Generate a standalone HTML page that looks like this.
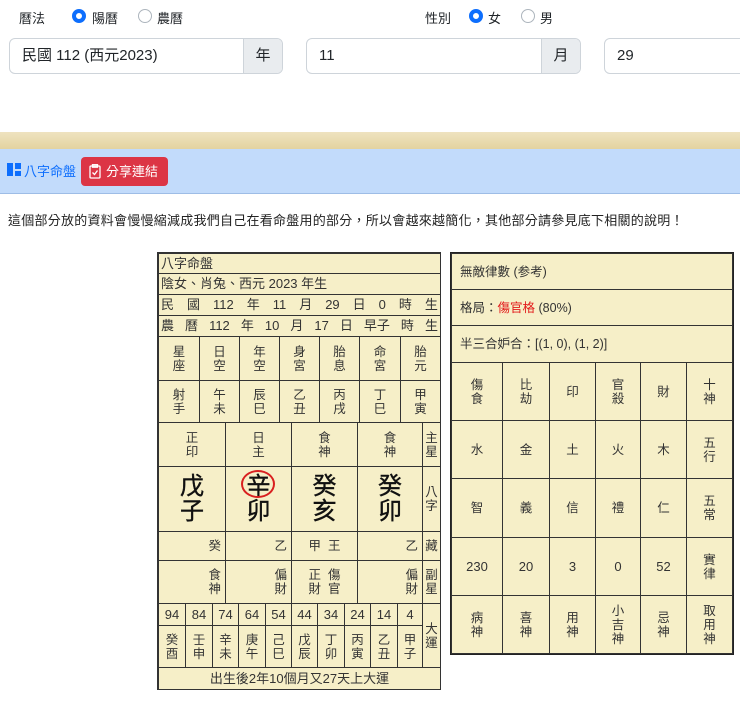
<!DOCTYPE html>
<html><head><meta charset="utf-8"><style>
*{box-sizing:border-box;margin:0;padding:0}
body{width:740px;height:705px;overflow:hidden;background:#fff;font-family:"Liberation Sans","Noto Sans CJK TC",sans-serif;color:#212529;position:relative}
.a{position:absolute}
.rad{position:absolute;width:14px;height:14px;border-radius:50%;border:1px solid #adb5bd;background:#fff}
.rad.on{border:4px solid #0d6efd}
.inp{position:absolute;top:38px;height:36px;border:1px solid #ced4da;border-radius:6px;background:#fff;font-size:15px;padding:8px 12px;line-height:18px;overflow:hidden}
.add{position:absolute;top:0;bottom:0;right:0;width:39px;background:#e9ecef;border-left:1px solid #ced4da;text-align:center;line-height:34px}
.c{position:absolute;border:1px solid #333;background:#f6efc8;display:flex;align-items:center;justify-content:center;font-size:12.5px;line-height:14px;color:#333;text-align:center}
.l{justify-content:flex-start;padding-left:2px;font-size:13px}
.sp{justify-content:space-between;padding:0 2px;font-size:13px}
.r{justify-content:flex-end;padding-right:4px}
.big{font-size:24px;line-height:25px;color:#111;font-weight:normal;-webkit-text-stroke:0.4px #111}
</style></head><body>
<div class="a" style="left:19px;top:8px;font-size:13px">曆法</div>
<div class="rad on" style="left:72px;top:9px"></div><div class="a" style="left:92px;top:8px;font-size:13px">陽曆</div>
<div class="rad" style="left:138px;top:9px"></div><div class="a" style="left:157px;top:8px;font-size:13px">農曆</div>
<div class="a" style="left:425px;top:8px;font-size:13px">性別</div>
<div class="rad on" style="left:469px;top:9px"></div><div class="a" style="left:488px;top:8px;font-size:13px">女</div>
<div class="rad" style="left:521px;top:9px"></div><div class="a" style="left:540px;top:8px;font-size:13px">男</div>
<div class="inp" style="left:9px;width:274px">民國 112 (西元2023)<div class="add">年</div></div>
<div class="inp" style="left:306px;width:275px">11<div class="add">月</div></div>
<div class="inp" style="left:604px;width:150px">29</div>
<div class="a" style="left:0;top:132px;width:740px;height:17px;background:linear-gradient(#efe3c0,#e3d3a0)"></div>
<div class="a" style="left:0;top:149px;width:740px;height:45px;background:#c2dbfb;border-bottom:1px solid #9ebde6"></div>
<svg class="a" style="left:7px;top:163px" width="14" height="13"><rect x="0" y="0" width="6" height="13" fill="#0d6efd"/><rect x="8" y="0" width="6" height="6" fill="#0d6efd"/><rect x="8" y="8" width="6" height="5" fill="#0d6efd"/></svg>
<div class="a" style="left:24px;top:161px;font-size:13px;color:#0d6efd">八字命盤</div>
<div class="a" style="left:81px;top:157px;width:87px;height:29px;background:#dc3545;border-radius:4px;color:#fff;font-size:13px;line-height:29px;padding-left:25px">分享連結</div>
<svg class="a" style="left:89px;top:164px" width="12" height="15" fill="none" stroke="#fff" stroke-width="1.3"><rect x="1" y="2" width="10" height="12" rx="1"/><rect x="3.5" y="0.7" width="5" height="2.5"/><path d="M3.5 8.5l2 2 3-4"/></svg>
<div class="a" style="left:8px;top:210px;font-size:13px;letter-spacing:0.25px;color:#222;white-space:nowrap">這個部分放的資料會慢慢縮減成我們自己在看命盤用的部分，所以會越來越簡化，其他部分請參見底下相關的說明！</div>

<div class="a" style="left:157px;top:252px;width:284px;height:438px;border:1px solid #333;background:#f6efc8"></div>
<div class="c l" style="left:158px;top:253px;width:283px;height:21px">八字命盤</div>
<div class="c l" style="left:158px;top:273px;width:283px;height:22px">陰女、肖兔、西元 2023 年生</div>
<div class="c sp" style="left:158px;top:294px;width:283px;height:22px"><span>民</span><span>國</span><span>112</span><span>年</span><span>11</span><span>月</span><span>29</span><span>日</span><span>0</span><span>時</span><span>生</span></div>
<div class="c sp" style="left:158px;top:315px;width:283px;height:22px"><span>農</span><span>曆</span><span>112</span><span>年</span><span>10</span><span>月</span><span>17</span><span>日</span><span>早子</span><span>時</span><span>生</span></div>
<div class="c" style="left:158px;top:336px;width:42px;height:45px">星<br>座</div>
<div class="c" style="left:199px;top:336px;width:41px;height:45px">日<br>空</div>
<div class="c" style="left:239px;top:336px;width:41px;height:45px">年<br>空</div>
<div class="c" style="left:279px;top:336px;width:41px;height:45px">身<br>宮</div>
<div class="c" style="left:319px;top:336px;width:41px;height:45px">胎<br>息</div>
<div class="c" style="left:359px;top:336px;width:42px;height:45px">命<br>宮</div>
<div class="c" style="left:400px;top:336px;width:41px;height:45px">胎<br>元</div>
<div class="c" style="left:158px;top:380px;width:42px;height:43px">射<br>手</div>
<div class="c" style="left:199px;top:380px;width:41px;height:43px">午<br>未</div>
<div class="c" style="left:239px;top:380px;width:41px;height:43px">辰<br>巳</div>
<div class="c" style="left:279px;top:380px;width:41px;height:43px">乙<br>丑</div>
<div class="c" style="left:319px;top:380px;width:41px;height:43px">丙<br>戌</div>
<div class="c" style="left:359px;top:380px;width:42px;height:43px">丁<br>巳</div>
<div class="c" style="left:400px;top:380px;width:41px;height:43px">甲<br>寅</div>
<div class="c" style="left:158px;top:422px;width:68px;height:45px">正<br>印</div>
<div class="c" style="left:225px;top:422px;width:67px;height:45px">日<br>主</div>
<div class="c" style="left:291px;top:422px;width:67px;height:45px">食<br>神</div>
<div class="c" style="left:357px;top:422px;width:66px;height:45px">食<br>神</div>
<div class="c" style="left:422px;top:422px;width:19px;height:45px">主<br>星</div>
<div class="c big" style="left:158px;top:466px;width:68px;height:66px">戊<br>子</div>
<div class="c big" style="left:225px;top:466px;width:67px;height:66px"><span>辛<br>卯</span></div>
<div class="a" style="left:241px;top:470px;width:34px;height:28px;border:2px solid #d92020;border-radius:50%"></div>
<div class="c big" style="left:291px;top:466px;width:67px;height:66px">癸<br>亥</div>
<div class="c big" style="left:357px;top:466px;width:66px;height:66px">癸<br>卯</div>
<div class="c" style="left:422px;top:466px;width:19px;height:66px">八<br>字</div>
<div class="c r" style="left:158px;top:531px;width:68px;height:30px">癸</div>
<div class="c r" style="left:225px;top:531px;width:67px;height:30px">乙</div>
<div class="c" style="left:291px;top:531px;width:67px;height:30px">甲&nbsp;&nbsp;王</div>
<div class="c r" style="left:357px;top:531px;width:66px;height:30px">乙</div>
<div class="c" style="left:422px;top:531px;width:19px;height:30px">藏</div>
<div class="c r" style="left:158px;top:560px;width:68px;height:44px">食<br>神</div>
<div class="c r" style="left:225px;top:560px;width:67px;height:44px">偏<br>財</div>
<div class="c" style="left:291px;top:560px;width:67px;height:44px">正&nbsp;&nbsp;傷<br>財&nbsp;&nbsp;官</div>
<div class="c r" style="left:357px;top:560px;width:66px;height:44px">偏<br>財</div>
<div class="c" style="left:422px;top:560px;width:19px;height:44px">副<br>星</div>
<div class="c" style="left:158px;top:603px;width:28px;height:23px;font-size:13px">94</div>
<div class="c" style="left:185px;top:603px;width:28px;height:23px;font-size:13px">84</div>
<div class="c" style="left:212px;top:603px;width:27px;height:23px;font-size:13px">74</div>
<div class="c" style="left:238px;top:603px;width:28px;height:23px;font-size:13px">64</div>
<div class="c" style="left:265px;top:603px;width:27px;height:23px;font-size:13px">54</div>
<div class="c" style="left:291px;top:603px;width:27px;height:23px;font-size:13px">44</div>
<div class="c" style="left:317px;top:603px;width:28px;height:23px;font-size:13px">34</div>
<div class="c" style="left:344px;top:603px;width:27px;height:23px;font-size:13px">24</div>
<div class="c" style="left:370px;top:603px;width:28px;height:23px;font-size:13px">14</div>
<div class="c" style="left:397px;top:603px;width:26px;height:23px;font-size:13px">4</div>
<div class="c" style="left:158px;top:625px;width:28px;height:43px">癸<br>酉</div>
<div class="c" style="left:185px;top:625px;width:28px;height:43px">壬<br>申</div>
<div class="c" style="left:212px;top:625px;width:27px;height:43px">辛<br>未</div>
<div class="c" style="left:238px;top:625px;width:28px;height:43px">庚<br>午</div>
<div class="c" style="left:265px;top:625px;width:27px;height:43px">己<br>巳</div>
<div class="c" style="left:291px;top:625px;width:27px;height:43px">戊<br>辰</div>
<div class="c" style="left:317px;top:625px;width:28px;height:43px">丁<br>卯</div>
<div class="c" style="left:344px;top:625px;width:27px;height:43px">丙<br>寅</div>
<div class="c" style="left:370px;top:625px;width:28px;height:43px">乙<br>丑</div>
<div class="c" style="left:397px;top:625px;width:26px;height:43px">甲<br>子</div>
<div class="c" style="left:422px;top:603px;width:19px;height:65px">大<br>運</div>
<div class="c" style="left:158px;top:667px;width:283px;height:23px;font-size:13px">出生後2年10個月又27天上大運</div>

<div class="a" style="left:450px;top:252px;width:284px;height:403px;border:2px solid #222;background:#f6efc8"></div>
<div class="c l" style="left:451px;top:253px;width:282px;height:37px;padding-left:8px;font-size:12.5px">無敵律數 (参考)</div>
<div class="c l" style="left:451px;top:289px;width:282px;height:37px;padding-left:8px;font-size:12.5px">格局：<span style="color:#e21a1a">傷官格</span>&nbsp;(80%)</div>
<div class="c l" style="left:451px;top:325px;width:282px;height:38px;padding-left:8px;font-size:12.5px">半三合妒合：[(1, 0), (1, 2)]</div>
<div class="c" style="left:451px;top:362px;width:52px;height:59px">傷<br>食</div>
<div class="c" style="left:502px;top:362px;width:48px;height:59px">比<br>劫</div>
<div class="c" style="left:549px;top:362px;width:47px;height:59px">印</div>
<div class="c" style="left:595px;top:362px;width:46px;height:59px">官<br>殺</div>
<div class="c" style="left:640px;top:362px;width:47px;height:59px">財</div>
<div class="c" style="left:686px;top:362px;width:47px;height:59px">十<br>神</div>
<div class="c" style="left:451px;top:420px;width:52px;height:59px">水</div>
<div class="c" style="left:502px;top:420px;width:48px;height:59px">金</div>
<div class="c" style="left:549px;top:420px;width:47px;height:59px">土</div>
<div class="c" style="left:595px;top:420px;width:46px;height:59px">火</div>
<div class="c" style="left:640px;top:420px;width:47px;height:59px">木</div>
<div class="c" style="left:686px;top:420px;width:47px;height:59px">五<br>行</div>
<div class="c" style="left:451px;top:478px;width:52px;height:60px">智</div>
<div class="c" style="left:502px;top:478px;width:48px;height:60px">義</div>
<div class="c" style="left:549px;top:478px;width:47px;height:60px">信</div>
<div class="c" style="left:595px;top:478px;width:46px;height:60px">禮</div>
<div class="c" style="left:640px;top:478px;width:47px;height:60px">仁</div>
<div class="c" style="left:686px;top:478px;width:47px;height:60px">五<br>常</div>
<div class="c" style="left:451px;top:537px;width:52px;height:59px;font-size:13px">230</div>
<div class="c" style="left:502px;top:537px;width:48px;height:59px;font-size:13px">20</div>
<div class="c" style="left:549px;top:537px;width:47px;height:59px;font-size:13px">3</div>
<div class="c" style="left:595px;top:537px;width:46px;height:59px;font-size:13px">0</div>
<div class="c" style="left:640px;top:537px;width:47px;height:59px;font-size:13px">52</div>
<div class="c" style="left:686px;top:537px;width:47px;height:59px">實<br>律</div>
<div class="c" style="left:451px;top:595px;width:52px;height:59px">病<br>神</div>
<div class="c" style="left:502px;top:595px;width:48px;height:59px">喜<br>神</div>
<div class="c" style="left:549px;top:595px;width:47px;height:59px">用<br>神</div>
<div class="c" style="left:595px;top:595px;width:46px;height:59px">小<br>吉<br>神</div>
<div class="c" style="left:640px;top:595px;width:47px;height:59px">忌<br>神</div>
<div class="c" style="left:686px;top:595px;width:47px;height:59px">取<br>用<br>神</div>
</body></html>
